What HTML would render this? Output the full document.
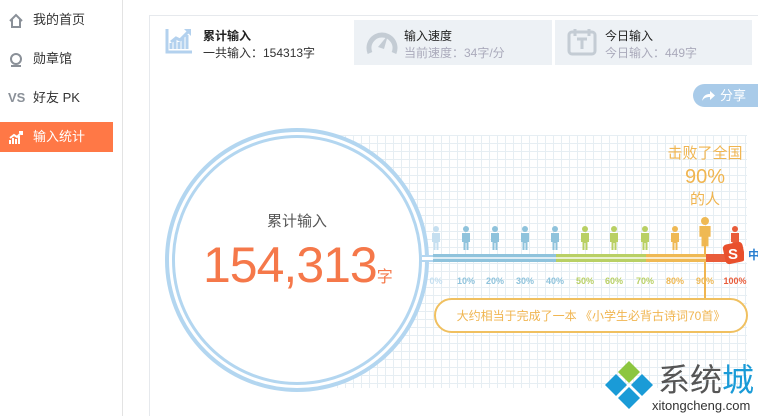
<!DOCTYPE html>
<html><head><meta charset="utf-8"><style>
*{margin:0;padding:0;box-sizing:border-box}
html,body{width:758px;height:416px;overflow:hidden}
body{background:#fff;font-family:"Liberation Sans","Noto Sans CJK SC",sans-serif;position:relative}
.side{position:absolute;left:0;top:0;width:123px;height:416px;border-right:1px solid #e3e3e3}
.item{position:absolute;left:0;width:113px;height:30px;font-size:13px;color:#333;line-height:30px;padding-left:33px}
.item.act{background:#ff7846;color:#fff}
.ic{position:absolute;left:8px;top:8px}
.card{position:absolute;left:149px;top:15px;width:620px;height:410px;border:1px solid #e6e9ed}
.tab{position:absolute;top:20px;height:45px}
.t1{font-size:12px;color:#222;font-weight:bold;position:absolute;top:7px}
.t2{font-size:12px;color:#999;position:absolute;top:24px}
.abs{position:absolute}
</style></head><body>
<div class="side">
 <div class="item" style="top:5px"><svg class="ic" width="16" height="16" viewBox="0 0 16 16"><path d="M2 8 L8 2 L14 8 M4 6.5 V14 H12 V6.5" fill="none" stroke="#8a9098" stroke-width="2"/></svg>我的首页</div>
 <div class="item" style="top:44px"><svg class="ic" width="16" height="16" viewBox="0 0 16 16"><circle cx="8" cy="7" r="5" fill="none" stroke="#8a9098" stroke-width="2"/><path d="M3 14h10" stroke="#8a9098" stroke-width="2"/></svg>勋章馆</div>
 <div class="item" style="top:83px"><span class="abs" style="left:8px;top:0;font-weight:bold;color:#8a9098;font-size:13px">VS</span>好友 PK</div>
 <div class="item act" style="top:122px"><svg class="ic" width="16" height="16" viewBox="0 0 16 16"><path d="M2 14V10M5 14V8M8 14V9M11 14V6M2 8L6 5 9 7 14 2M11 2h3v3" fill="none" stroke="#fff" stroke-width="2"/></svg>输入统计</div>
</div>
<div class="card"></div>
<div class="tab" style="left:150px;width:202px;background:#fff">
 <svg class="abs" style="left:15px;top:7px" width="28" height="27" viewBox="0 0 28 27"><path d="M2 2V25H27" fill="none" stroke="#b3d1ee" stroke-width="3"/><path d="M6 22V16M10 22V13M14 22V15M18 22V11M22 22V8M6 15L11 11 15 13 24 4" fill="none" stroke="#b3d1ee" stroke-width="3"/><path d="M19 2h7v7z" fill="#b3d1ee"/></svg>
 <span class="t1" style="left:53px">累计输入</span><span class="t2" style="left:53px;color:#333">一共输入：154313字</span>
</div>
<div class="tab" style="left:354px;width:198px;background:#edf1f5">
 <svg class="abs" style="left:12px;top:7px" width="32" height="30" viewBox="0 0 32 30"><path d="M4 26A13 13 0 1 1 28 26" fill="none" stroke="#c4ccd4" stroke-width="5"/><path d="M12 20L22 8 18 22z" fill="#c4ccd4"/></svg>
 <span class="t1" style="left:50px;font-weight:normal">输入速度</span><span class="t2" style="left:50px;color:#aab">当前速度：34字/分</span>
</div>
<div class="tab" style="left:555px;width:197px;background:#edf1f5">
 <svg class="abs" style="left:12px;top:7px" width="30" height="30" viewBox="0 0 30 30"><rect x="2" y="5" width="26" height="22" rx="3" fill="none" stroke="#c4ccd4" stroke-width="3"/><path d="M8 2v7M22 2v7M10 12h10M15 12v10" stroke="#c4ccd4" stroke-width="3"/></svg>
 <span class="t1" style="left:50px;font-weight:normal">今日输入</span><span class="t2" style="left:50px;color:#aab">今日输入：449字</span>
</div>
<div class="abs" style="left:693px;top:84px;width:65px;height:23px;background:#a9cbe9;border-radius:12px 0 0 12px;color:#fff;font-size:13px;line-height:23px;padding-left:27px">分享<svg class="abs" style="left:8px;top:5px" width="14" height="13" viewBox="0 0 14 13"><path d="M1 12C2 6 6 5 9 5V2L14 6.5 9 11V8C5 8 3 9 1 12z" fill="#fff"/></svg></div>
<div class="abs" style="left:337px;top:135px;width:410px;height:253px;background-image:linear-gradient(#e6eef3 1px,transparent 1px),linear-gradient(90deg,#e6eef3 1px,transparent 1px);background-size:8px 8px"></div>
<div class="abs" style="left:165px;top:128px;width:264px;height:264px;border-radius:50%;border:4px solid #b3d6f0;background:#fff"></div>
<div class="abs" style="left:172px;top:135px;width:250px;height:250px;border-radius:50%;border:3px solid #b3d6f0"></div>
<div class="abs" style="left:422px;top:255px;width:14px;height:7px;background:#fff;border-top:2px solid #b3d6f0;border-bottom:2px solid #b3d6f0"></div>
<div class="abs" style="left:197px;top:210px;width:200px;text-align:center;font-size:15px;color:#555">累计输入</div>
<div class="abs" style="left:203px;top:236px;font-size:50px;color:#f5784a;letter-spacing:-1px">154,313<span style="font-size:16px;letter-spacing:0">字</span></div>
<div class="abs" style="left:665px;top:144px;width:80px;text-align:center;color:#f0b550;font-size:15px;line-height:20px">击败了全国<br><span style="font-size:20px;line-height:26px">90%</span><br>的人</div>
<svg class="abs" style="left:425px;top:210px" width="333" height="130" viewBox="425 210 333 130">
<path d="M705 230V298" stroke="#f0b550" stroke-width="2"/>
<rect x="433" y="254" width="123" height="8" fill="#8fc3dc"/><rect x="556" y="254" width="90" height="8" fill="#b9d064"/><rect x="646" y="254" width="60" height="8" fill="#efb954"/><rect x="706" y="254" width="34" height="8" fill="#e95c3a"/>
<rect x="433" y="257" width="273" height="2" fill="#fff" opacity=".7"/>
<g font-size="9" font-weight="bold" text-anchor="middle" font-family="Liberation Sans">
<text x="436" y="284" fill="#c5dff0">0%</text><text x="466" y="284" fill="#8fc3dc">10%</text><text x="495" y="284" fill="#8fc3dc">20%</text><text x="525" y="284" fill="#8fc3dc">30%</text><text x="555" y="284" fill="#8fc3dc">40%</text><text x="585" y="284" fill="#b9d064">50%</text><text x="614" y="284" fill="#b9d064">60%</text><text x="645" y="284" fill="#b9d064">70%</text><text x="675" y="284" fill="#efb954">80%</text><text x="705" y="284" fill="#efb954">90%</text><text x="735" y="284" fill="#e95c3a">100%</text></g>
<defs><path id="p" d="M-4 5h8v9h-1.5v8h-2v-7h-1v7h-2v-8h-1.5z"/></defs>
<g fill="#c5dff0"><circle cx="436" cy="229" r="3"/><use href="#p" x="436" y="228"/></g>
<g fill="#8fc3dc"><circle cx="466" cy="229" r="3"/><use href="#p" x="466" y="228"/><circle cx="495" cy="229" r="3"/><use href="#p" x="495" y="228"/><circle cx="525" cy="229" r="3"/><use href="#p" x="525" y="228"/><circle cx="555" cy="229" r="3"/><use href="#p" x="555" y="228"/></g>
<g fill="#b9d064"><circle cx="585" cy="229" r="3"/><use href="#p" x="585" y="228"/><circle cx="614" cy="229" r="3"/><use href="#p" x="614" y="228"/><circle cx="645" cy="229" r="3"/><use href="#p" x="645" y="228"/></g>
<g fill="#efb954"><circle cx="675" cy="229" r="3"/><use href="#p" x="675" y="228"/><circle cx="705" cy="221" r="4"/><use href="#p" x="0" y="0" transform="translate(705 220) scale(1.4 1.2)"/></g>
<g fill="#e95c3a"><circle cx="735" cy="229" r="3"/><use href="#p" x="735" y="228"/></g>
<rect x="435" y="299" width="312" height="33" rx="16.5" fill="#fff" stroke="#f0c060" stroke-width="2"/>
<text x="591" y="320" text-anchor="middle" font-size="12" fill="#f0b550" font-family="Liberation Sans,Noto Sans CJK SC">大约相当于完成了一本 《小学生必背古诗词70首》</text>
<rect x="724" y="243" width="20" height="20" rx="4" fill="#e9502d" transform="rotate(-12 734 253)"/>
<text x="728" y="259" font-size="15" font-weight="bold" fill="#fff" font-family="Liberation Sans">S</text>
<rect x="744" y="246" width="14" height="16" fill="#fff"/><text x="748" y="259" font-size="12" font-weight="bold" fill="#2a7fd0" font-family="Noto Sans CJK SC">中</text>
</svg>
<svg class="abs" style="left:603px;top:360px" width="52" height="52" viewBox="0 0 52 52">
<path d="M26 1L37 12 26 23 15 12z" fill="#8cc63f"/><path d="M13 14L24 25 13 36 2 25z" fill="#1a9bd7"/><path d="M39 14L50 25 39 36 28 25z" fill="#1a9bd7"/><path d="M26 27L37 38 26 49 15 38z" fill="#1a9bd7"/></svg>
<div class="abs" style="left:658px;top:360px;font-size:32px;line-height:36px;color:#555;font-family:'Noto Sans CJK SC',sans-serif">系统<span style="color:#1a9bd7">城</span></div>
<div class="abs" style="left:652px;top:398px;font-size:13px;color:#333">xitongcheng.com</div>
</body></html>
